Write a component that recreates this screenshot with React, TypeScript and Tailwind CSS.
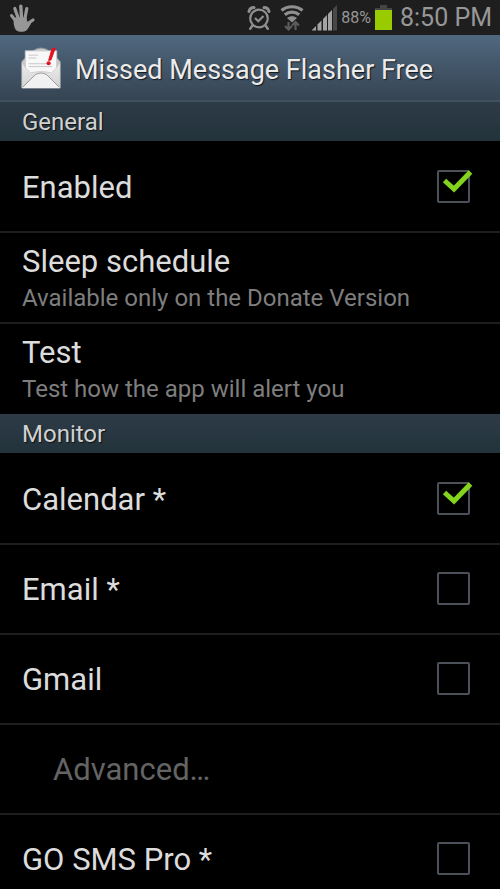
import React from "react";

type RowProps = {
  title: string;
  summary?: string;
  checked?: boolean;
};

function HandIcon() {
  return (
    <svg viewBox="0 0 28 28" className="h-7 w-7" aria-hidden="true">
      <g stroke="#979797" strokeLinecap="round" strokeLinejoin="round" fill="none">
        <path d="M8.500 18 3.500 11.500" strokeWidth="3" />
        <path d="M10.500 15 6.800 4.500" strokeWidth="3.200" />
        <path d="M13.500 14 12.800 2.200" strokeWidth="3.400" />
        <path d="M16.800 15 18.800 4.500" strokeWidth="3.200" />
        <path d="M18.500 22.500 22 18 25 16" strokeWidth="3.200" />
      </g>
      <path
        d="M7.500 13.500h11l.7 4 2.300.5 1.500 1.500c-2 3-3 6.500-6 7.700-3.500 1.100-7 1-9.300-1.400C6 23 5 18 6 14z"
        fill="#979797"
      />
    </svg>
  );
}

function AlarmIcon() {
  return (
    <svg viewBox="0 0 24 26" className="h-[26px] w-6" fill="none" stroke="#8f8f8f" aria-hidden="true">
      <circle cx="12" cy="13.500" r="8.800" strokeWidth="2.200" />
      <path d="m8 13 3.300 3.300 5.200-5.300" strokeWidth="2.200" />
      <path d="M2 6.500c.5-2.500 2.500-4 5-4M22 6.500c-.5-2.500-2.500-4-5-4" strokeWidth="3" strokeLinecap="round" />
      <path d="m5.500 20.500-2.300 3.300M18.500 20.500l2.300 3.300" strokeWidth="2.400" strokeLinecap="round" />
    </svg>
  );
}

function WifiIcon() {
  return (
    <svg viewBox="0 0 24 26" className="h-[26px] w-6" fill="none" aria-hidden="true">
      <g stroke="#8f8f8f" strokeWidth="3.200">
        <path d="M1.500 5.500c6-5 15-5 21 0" />
        <path d="M4.800 9.800c4.200-3.600 10.200-3.600 14.400 0" />
      </g>
      <path d="M7 13c3-2.400 7-2.400 10 0l-5 4.500z" fill="#8f8f8f" />
      <g stroke="#5c5c5c" strokeWidth="2.200">
        <path d="M8.500 17v7M5 21l3.500 3.500 3.500-3.500" />
        <path d="M15.500 25v-7M12 20.500l3.500-3.500 3.500 3.500" />
      </g>
    </svg>
  );
}

function SignalIcon() {
  return (
    <svg viewBox="0 0 25 26" className="h-[26px] w-[25px]" aria-hidden="true">
      <path d="M0 25.500V25l4-4v4.500z" fill="#a3a3a3" />
      <path d="M5.500 25.500v-6l4-4v10z" fill="#a3a3a3" />
      <path d="M11 25.500V14l4-4v15.500z" fill="#a3a3a3" />
      <path d="M16 25.500V9l4-4v20.500z" fill="#a3a3a3" />
      <path d="M21 25.500V4l4-4v25.500z" fill="#484848" />
    </svg>
  );
}

function BatteryIcon() {
  return (
    <svg viewBox="0 0 17 25" className="h-[25px] w-[17px]" aria-hidden="true">
      <path d="M5 0h7v3h5v3H0V3h5z" fill="#444" />
      <path d="M0 5h17v20H0z" fill="#99cc00" />
    </svg>
  );
}

function EnvelopeIcon() {
  return (
    <svg viewBox="0 0 42 44" className="h-[42px] w-10" aria-hidden="true">
      <defs>
        <linearGradient id="body" x1="0" y1="0" x2="0" y2="1">
          <stop offset="0" stopColor="#ededed" />
          <stop offset="1" stopColor="#d2d2d2" />
        </linearGradient>
      </defs>
      <path d="M1 15 5 11 14 3Q21-1 28 3l9 8 4 4v28H1z" fill="#c8c8c8" stroke="#8d9299" />
      <path d="M4.500 4h33v25h-33z" fill="#f8f8f8" stroke="#c9c9c9" />
      <path d="M8 8.500h10M8 11.500h8M8 17.500h19M8 20.500h25" stroke="#c6c6c6" />
      <path d="M1 16l4 6 5 5q11-3 22 0l5-5 4-6v27H1z" fill="url(#body)" stroke="#c4c4c4" strokeWidth=".6" />
      <path d="M1.500 42.500 15 29q6-3.500 12 0l13.500 13.500z" fill="#f1f1f1" stroke="#979797" />
      <path d="M1.500 42.500h39" stroke="#f8f8f8" />
      <path d="M32.500 2 36 1l-4.500 12.500-2.500.5z" fill="#e8101c" stroke="#e8101c" strokeLinejoin="round" />
      <circle cx="29" cy="17" r="2.200" fill="#e8101c" />
    </svg>
  );
}

function SectionTitle({ children }: { children: React.ReactNode }) {
  return (
    <h2 className="h-[39px] shrink-0 bg-linear-to-b from-[#2e3b47] to-[#22333b] px-[22px] text-2xl leading-10 text-[#cfd1d2] [text-shadow:1px_1px_1px_#111]">
      {children}
    </h2>
  );
}

function CheckRow({ title, checked }: RowProps) {
  return (
    <label className="flex h-[90px] shrink-0 items-center justify-between border-t-2 border-[#1e1e1e] pr-[30px] pb-0.5 pl-[22px] text-[31px] text-[#dcdcdc] first:border-transparent">
      <span className="pt-1">{title}</span>
      <span className="relative block h-[33px] w-[33px]">
        <input
          type="checkbox"
          defaultChecked={checked}
          className="peer block h-full w-full appearance-none rounded-xs border-2 border-[#4c5058]"
        />
        <svg
          viewBox="0 0 38 33"
          className="pointer-events-none absolute top-0 left-0 hidden h-[33px] w-[38px] peer-checked:block"
          aria-hidden="true"
        >
          <path d="m7.500 10.500 9.500 8.500L33.500 2" fill="none" stroke="#82d41c" strokeWidth="5" />
        </svg>
      </span>
    </label>
  );
}

function LinkRow({ title, summary }: RowProps) {
  return (
    <button className="flex h-[91px] shrink-0 flex-col justify-center border-t-2 border-[#1e1e1e] px-[22px] pt-1 text-left">
      <span className="text-[31px] leading-9 text-[#dcdcdc]">{title}</span>
      <span className="text-2xl leading-9 text-[#7e7e7e]">{summary}</span>
    </button>
  );
}

export default function App() {
  return (
    <div className="flex h-screen flex-col overflow-hidden bg-black font-[Roboto,sans-serif]">
      <div className="flex h-[35px] shrink-0 items-center justify-between bg-[#1e1e1e] px-2 text-[#979797]">
        <HandIcon />
        <div className="flex items-center">
          <AlarmIcon />
          <span className="ml-[9px]">
            <WifiIcon />
          </span>
          <span className="ml-2">
            <SignalIcon />
          </span>
          <span className="ml-1 text-base">88%</span>
          <span className="ml-1">
            <BatteryIcon />
          </span>
          <span className="ml-2 text-[25px]">8:50 PM</span>
        </div>
      </div>

      <header className="flex h-[67px] shrink-0 items-center gap-3.5 border-b-2 border-[#41525f] bg-linear-to-b from-[#50687f] to-[#364453] px-[21px]">
        <EnvelopeIcon />
        <h1 className="pt-1.5 text-[27px] text-[#ebebeb] [text-shadow:1px_1px_1px_#101820]">
          Missed Message Flasher Free
        </h1>
      </header>

      <main className="flex flex-1 flex-col overflow-hidden">
        <SectionTitle>General</SectionTitle>
        <section className="flex shrink-0 flex-col pb-px">
          <CheckRow title="Enabled" checked />
          <LinkRow title="Sleep schedule" summary="Available only on the Donate Version" />
          <LinkRow title="Test" summary="Test how the app will alert you" />
        </section>

        <SectionTitle>Monitor</SectionTitle>
        <section className="flex shrink-0 flex-col pb-px">
          <CheckRow title="Calendar *" checked />
          <CheckRow title="Email *" />
          <CheckRow title="Gmail" />
          <button
            disabled
            className="h-[90px] shrink-0 border-t-2 border-[#1e1e1e] pt-0.5 pl-[53px] text-left text-[31px] text-[#646464]"
          >
            Advanced…
          </button>
          <CheckRow title="GO SMS Pro *" />
        </section>
      </main>
    </div>
  );
}
